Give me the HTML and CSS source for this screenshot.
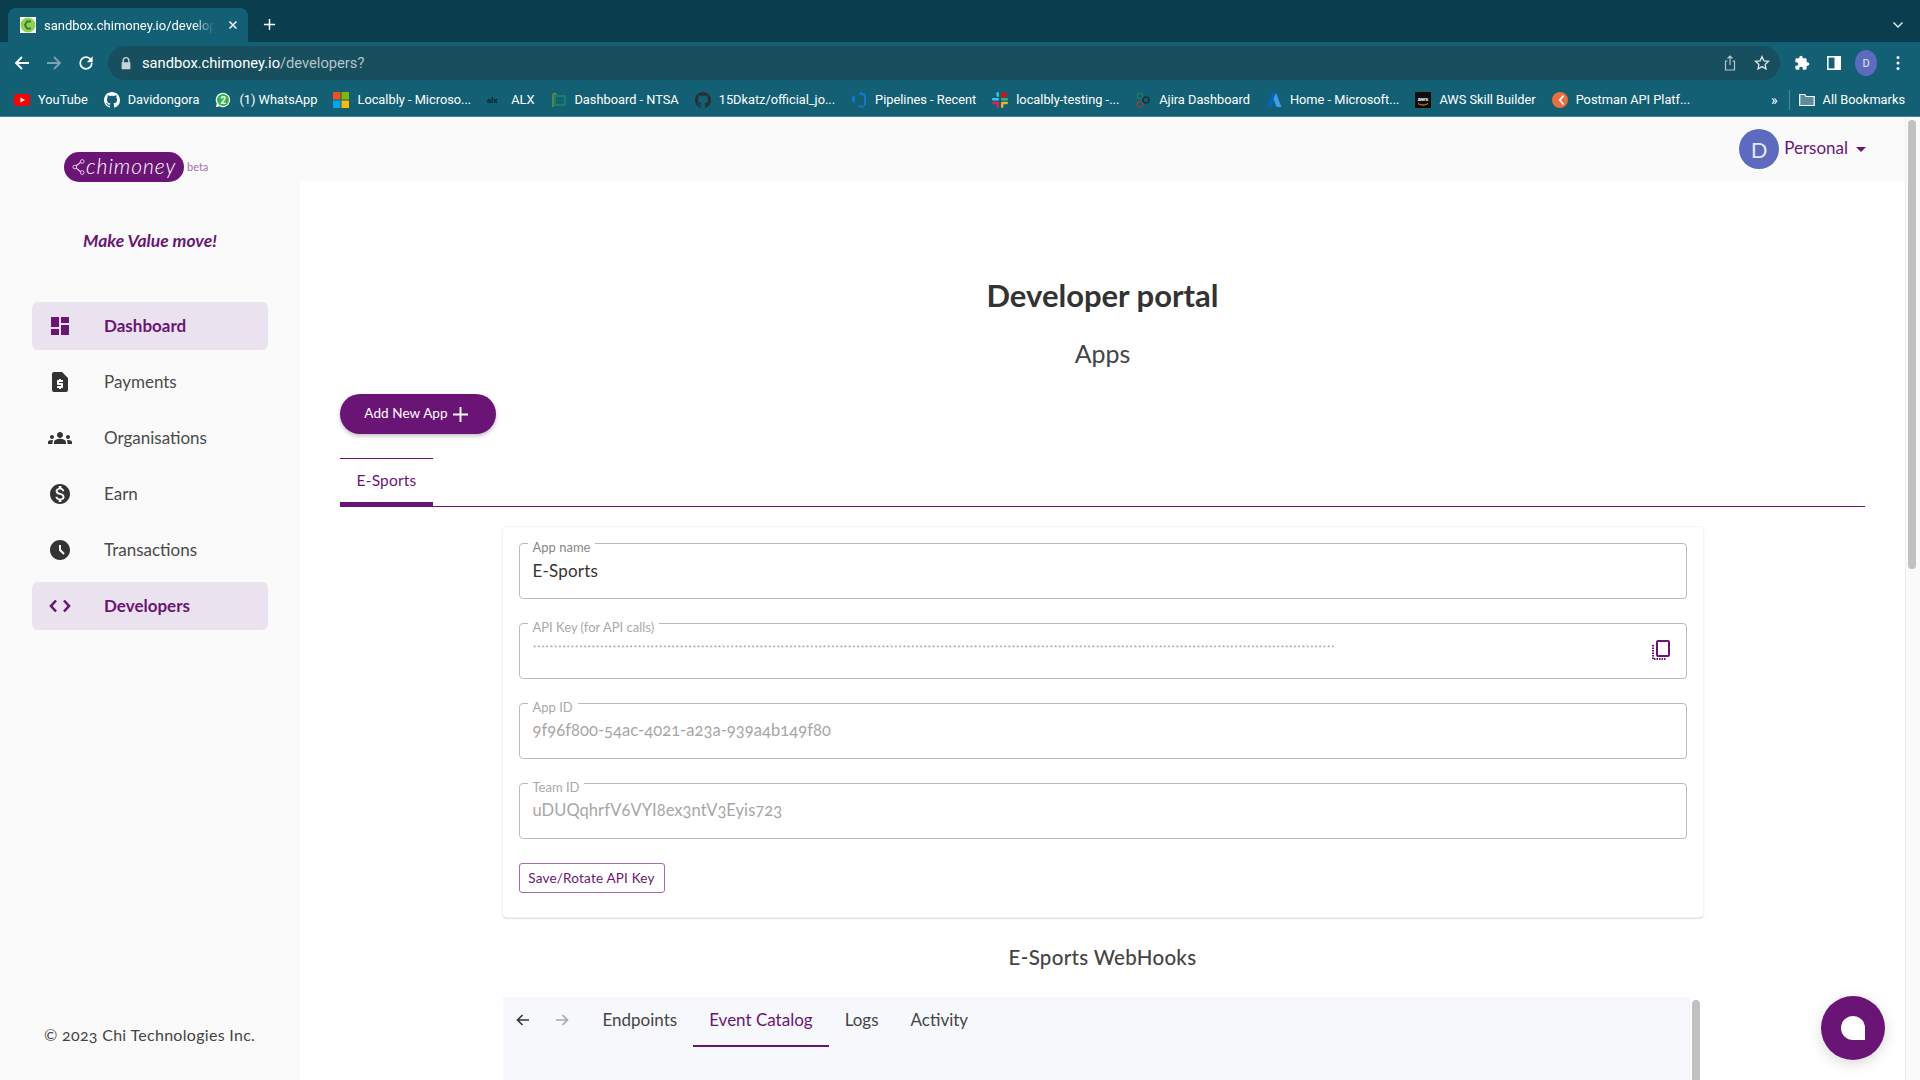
FILE: index.html
```html
<!DOCTYPE html>
<html>
<head>
  <title>Chimoney Developer portal</title>
  <link rel="stylesheet" href="styles.css">
</head>
<body>

  <svg class="defs" width="0" height="0">
    <symbol id="gh" viewBox="0 0 16 16"><path d="M8 0C3.58 0 0 3.58 0 8c0 3.54 2.29 6.53 5.47 7.59.4.07.55-.17.55-.38 0-.19-.01-.82-.01-1.49-2.01.37-2.53-.49-2.69-.94-.09-.23-.48-.94-.82-1.13-.28-.15-.68-.52-.01-.53.63-.01 1.08.58 1.23.82.72 1.21 1.87.87 2.33.66.07-.52.28-.87.51-1.07-1.78-.2-3.64-.89-3.64-3.95 0-.87.31-1.59.82-2.15-.08-.2-.36-1.02.08-2.12 0 0 .67-.21 2.2.82.64-.18 1.32-.27 2-.27.68 0 1.36.09 2 .27 1.53-1.04 2.2-.82 2.2-.82.44 1.1.16 1.92.08 2.12.51.56.82 1.27.82 2.15 0 3.07-1.87 3.75-3.65 3.95.29.25.54.73.54 1.48 0 1.07-.01 1.93-.01 2.2 0 .21.15.46.55.38A8.013 8.013 0 0016 8c0-4.42-3.58-8-8-8z"/></symbol>
  </svg>

  <!-- browser chrome -->
  <div class="tabstrip">
    <div class="tab">
      <svg class="fav" viewBox="0 0 16 16"><rect width="16" height="16" fill="#fff"/><circle cx="8" cy="8" r="7.5" fill="#8ed44f"/><path d="M11 4.5H7L5 8l2 3.5h4" fill="none" stroke="#3c7d3a" stroke-width="2"/></svg>
      <span class="tab-title">sandbox.chimoney.io/developers?</span>
      <svg class="tab-x" viewBox="0 0 10 10"><path d="M1.5 1.5l7 7M8.5 1.5l-7 7" stroke="#fff" stroke-width="1.4"/></svg>
    </div>
    <svg class="new-tab" viewBox="0 0 14 14"><path d="M7 1v12M1 7h12" stroke="#fff" stroke-width="1.6"/></svg>
    <svg class="tab-menu" viewBox="0 0 12 8"><path d="M1.5 1.5L6 6l4.5-4.5" fill="none" stroke="#dfe8ea" stroke-width="1.5"/></svg>
  </div>

  <div class="toolbar">
    <div class="tool"><svg viewBox="0 0 16 16"><path d="M15 8H2M8 2L2 8l6 6" fill="none" stroke="#fff" stroke-width="1.8"/></svg></div>
    <div class="tool"><svg viewBox="0 0 16 16"><path d="M1 8h13M8 2l6 6-6 6" fill="none" stroke="#7fa3ae" stroke-width="1.8"/></svg></div>
    <div class="tool"><svg class="reload" viewBox="0 0 24 24"><path fill="#fff" d="M17.65 6.35A7.96 7.96 0 0012 4a8 8 0 108 8h-2.1A5.9 5.9 0 1112 6.1c1.63 0 3.1.68 4.16 1.74L13 11h7V4l-2.35 2.35z"/></svg></div>
    <div class="address">
      <svg class="lock" viewBox="0 0 16 16"><path fill="#c6d3d7" d="M4 7V5a4 4 0 018 0v2h1v8H3V7h1zm1.6 0h4.8V5a2.4 2.4 0 00-4.8 0v2z"/></svg>
      <span class="url"><span class="host">sandbox.chimoney.io</span>/developers?</span>
      <div class="tool small"><svg viewBox="0 0 16 16"><path d="M5.5 6H3.5v9h9V6h-2M8 10V1.5M5.5 3.5L8 1l2.5 2.5" fill="none" stroke="#b5c6cb" stroke-width="1.2"/></svg></div>
      <div class="tool small"><svg viewBox="0 0 16 16"><path d="M8 1.6l1.9 4.2 4.6.5-3.4 3.1.9 4.5L8 11.6l-4 2.3.9-4.5L1.500 6.300l4.600-.5z" fill="none" stroke="#dbe5e8" stroke-width="1.3"/></svg></div>
    </div>
    <div class="tool"><svg viewBox="0 0 24 24"><path fill="#fff" d="M20.5 11H19V7c0-1.100-.9-2-2-2h-4V3.500C13 2.120 11.880 1 10.500 1S8 2.120 8 3.500V5H4c-1.100 0-1.990.9-1.990 2v3.800H3.500c1.490 0 2.700 1.210 2.700 2.700s-1.210 2.700-2.700 2.700H2V20c0 1.100.9 2 2 2h3.800v-1.500c0-1.490 1.210-2.700 2.700-2.700 1.490 0 2.700 1.210 2.700 2.700V22H17c1.100 0 2-.9 2-2v-4h1.500c1.380 0 2.500-1.120 2.500-2.500S21.880 11 20.500 11z"/></svg></div>
    <div class="tool"><svg viewBox="0 0 16 16"><rect x="1.800" y="1.800" width="12.400" height="12.400" fill="none" stroke="#fff" stroke-width="1.600"/><rect x="8.500" y="2" width="5.500" height="12" fill="#fff"/></svg></div>
    <div class="tool"><span class="profile">D</span></div>
    <div class="tool"><svg viewBox="0 0 4 16"><circle cx="2" cy="2.500" r="1.500" fill="#fff"/><circle cx="2" cy="8" r="1.500" fill="#fff"/><circle cx="2" cy="13.500" r="1.500" fill="#fff"/></svg></div>
  </div>

  <div class="bookmarks">
    <a class="bm"><svg viewBox="0 0 16 16"><rect y="2" width="16" height="12" rx="3" fill="#f00"/><path d="M6.500 5.500L11 8l-4.500 2.500z" fill="#fff"/></svg>YouTube</a>
    <a class="bm"><svg class="gh-light" viewBox="0 0 16 16"><use href="#gh"/></svg>Davidongora</a>
    <a class="bm"><svg viewBox="0 0 16 16"><path d="M8 .7a7.200 7.200 0 00-6.200 10.900L.8 15.300l3.800-1A7.200 7.200 0 108 .7z" fill="#fff"/><circle cx="8" cy="7.900" r="6" fill="#2bb741"/><text x="8" y="11.500" class="wa">2</text></svg>(1) WhatsApp</a>
    <a class="bm"><svg viewBox="0 0 16 16"><rect width="7.500" height="7.500" fill="#f25022"/><rect x="8.500" width="7.500" height="7.500" fill="#7fba00"/><rect y="8.500" width="7.500" height="7.500" fill="#00a4ef"/><rect x="8.500" y="8.500" width="7.500" height="7.500" fill="#ffb900"/></svg>Localbly - Microso...</a>
    <a class="bm"><svg viewBox="0 0 16 16"><text x="0" y="11" class="alx">alx</text></svg>ALX</a>
    <a class="bm"><svg viewBox="0 0 16 16"><rect x="5" y="4" width="10" height="9" fill="none" stroke="#1c8a5a" stroke-width="1.500"/><path d="M3 15V3c0-2 3-2 3 0" fill="none" stroke="#6f8d4a" stroke-width="1.500"/></svg>Dashboard - NTSA</a>
    <a class="bm"><svg class="gh-dark" viewBox="0 0 16 16"><use href="#gh"/></svg>15Dkatz/official_jo...</a>
    <a class="bm"><svg viewBox="0 0 16 16"><path d="M15 2.500V13l-4 3-6-2.200h8V3.800L7 2 10.500 0zM1 5l3-2v8l-3-1.800z" fill="#1476cf"/></svg>Pipelines - Recent</a>
    <a class="bm"><svg viewBox="0 0 16 16"><rect x="0" y="6" width="7" height="2.400" rx="1.200" fill="#36c5f0"/><rect x="4.500" y="0" width="2.400" height="5" rx="1.200" fill="#36c5f0"/><circle cx="12" cy="3" r="2.600" fill="#f00"/><rect x="9" y="6" width="7" height="2.400" rx="1.200" fill="#2eb67d"/><rect x="9" y="9.800" width="7" height="2.400" rx="1.200" fill="#ecb22e"/><rect x="9" y="11" width="2.400" height="5" rx="1.200" fill="#ecb22e"/><rect x="4.500" y="10" width="2.400" height="6" rx="1.200" fill="#e01e5a"/><rect x="0" y="9.800" width="7" height="2.400" rx="1.200" fill="#e01e5a"/></svg>localbly-testing -...</a>
    <a class="bm"><svg viewBox="0 0 16 16"><circle cx="5" cy="4" r="3" fill="none" stroke="#1f8a4c"/><circle cx="11" cy="8" r="3" fill="none" stroke="#12333d" stroke-width="1.500"/><circle cx="5" cy="12.500" r="3" fill="none" stroke="#c0392b"/></svg>Ajira Dashboard</a>
    <a class="bm"><svg viewBox="0 0 16 16"><path d="M6 1h4.500L6 15H.5z" fill="#0a64b4"/><path d="M10 1l5.500 14h-5L7.500 7z" fill="#3aa0ea"/></svg>Home - Microsoft...</a>
    <a class="bm"><svg viewBox="0 0 16 16"><rect width="16" height="16" fill="#0d0d0d"/><text x="8" y="9" class="aws">aws</text><path d="M3 11.500c3 2 7 2 10 0" fill="none" stroke="#f90" stroke-width="1"/></svg>AWS Skill Builder</a>
    <a class="bm"><svg viewBox="0 0 16 16"><circle cx="8" cy="8" r="8" fill="#ef6c3d"/><path d="M11 3L6.500 8l4.500 5 1-1-3-4 3-3.500z" fill="#fff"/></svg>Postman API Platf...</a>
    <span class="bm-more">»</span>
    <span class="bm-sep"></span>
    <a class="bm bm-all"><svg viewBox="0 0 16 16"><path d="M.7 13.500V2.500h5l1.500 2h8v9z" fill="#5d8d9c" stroke="#fff" stroke-width="1.200"/></svg>All Bookmarks</a>
  </div>

  <!-- page -->
  <div class="page">
    <aside class="sidebar">
      <div class="logo-row">
        <div class="logo">
          <svg viewBox="0 0 14 18"><path d="M11 2.500L3 9l8 6.500" fill="none" stroke="#e7d6ea" stroke-width="1.200"/><circle cx="11" cy="3" r="2" fill="#6a1575" stroke="#e7d6ea"/><circle cx="3" cy="9" r="2" fill="#6a1575" stroke="#e7d6ea"/><circle cx="11" cy="15" r="2" fill="#6a1575" stroke="#e7d6ea"/></svg>
          <span>chimoney</span>
        </div>
        <span class="beta">beta</span>
      </div>
      <p class="tagline">Make Value move!</p>
      <nav class="nav">
        <a class="nav-item active"><svg viewBox="0 0 24 24"><path d="M3 13h8V3H3v10zm0 8h8v-6H3v6zm10 0h8V11h-8v10zm0-18v6h8V3h-8z"/></svg>Dashboard</a>
        <a class="nav-item"><svg viewBox="0 0 24 24"><path d="M14 2H6c-1.100 0-1.990.9-1.990 2L4 20c0 1.100.89 2 1.990 2H18c1.100 0 2-.9 2-2V8l-6-6zm1 10h-4v1h3c.55 0 1 .45 1 1v3c0 .55-.45 1-1 1h-1v1h-2v-1H9v-2h4v-1h-3c-.55 0-1-.45-1-1v-3c0-.55.45-1 1-1h1V9h2v1h2v2z"/></svg>Payments</a>
        <a class="nav-item"><svg viewBox="0 0 24 24"><path d="M12 12.750c1.630 0 3.070.39 4.240.9 1.080.48 1.760 1.560 1.760 2.730V18H6v-1.610c0-1.180.68-2.260 1.760-2.730 1.170-.52 2.610-.91 4.240-.91zM4 13c1.100 0 2-.9 2-2s-.9-2-2-2-2 .9-2 2 .9 2 2 2zm1.130 1.100c-.37-.06-.74-.1-1.130-.1-.99 0-1.930.21-2.780.58C.48 14.900 0 15.620 0 16.430V18h4.500v-1.610c0-.83.23-1.610.63-2.290zM20 13c1.100 0 2-.9 2-2s-.9-2-2-2-2 .9-2 2 .9 2 2 2zm4 3.430c0-.81-.48-1.530-1.220-1.850-.85-.37-1.790-.58-2.780-.58-.39 0-.76.04-1.130.1.4.68.63 1.460.63 2.290V18H24v-1.570zM12 6c1.660 0 3 1.340 3 3s-1.340 3-3 3-3-1.340-3-3 1.340-3 3-3z"/></svg>Organisations</a>
        <a class="nav-item"><svg viewBox="0 0 24 24"><path d="M12 2C6.480 2 2 6.480 2 12s4.480 10 10 10 10-4.480 10-10S17.520 2 12 2zm1.410 16.090V20h-2.670v-1.930c-1.710-.36-3.160-1.460-3.270-3.400h1.960c.1 1.050.82 1.870 2.650 1.870 1.960 0 2.400-.98 2.400-1.590 0-.83-.44-1.610-2.670-2.140-2.480-.6-4.180-1.620-4.180-3.670 0-1.720 1.390-2.840 3.110-3.210V4h2.670v1.950c1.860.45 2.790 1.860 2.850 3.390H14.300c-.05-1.110-.64-1.870-2.220-1.870-1.500 0-2.400.68-2.400 1.640 0 .84.65 1.390 2.670 1.910s4.180 1.390 4.180 3.910c-.01 1.830-1.380 2.830-3.120 3.160z"/></svg>Earn</a>
        <a class="nav-item"><svg viewBox="0 0 24 24"><path d="M11.990 2C6.470 2 2 6.480 2 12s4.470 10 9.990 10C17.520 22 22 17.520 22 12S17.520 2 11.990 2zm3.300 14.710L11 12.410V7h2v4.590l3.710 3.710-1.420 1.410z"/></svg>Transactions</a>
        <a class="nav-item active"><svg class="code" viewBox="0 0 24 24"><path d="M8 6.500L3 12l5 5.500M16 6.500l5 5.500-5 5.500"/></svg>Developers</a>
      </nav>
      <p class="copyright">© 2023 Chi Technologies Inc.</p>
    </aside>

    <main class="main">
      <div class="topbar">
        <span class="avatar">D</span>
        <span class="account">Personal</span>
        <span class="caret"></span>
      </div>

      <div class="content">
        <h1>Developer portal</h1>
        <h2>Apps</h2>
        <button class="add-btn"><span>Add New App</span>
          <svg viewBox="0 0 14 14"><path d="M7 0v14M0 7h14" stroke="#fff" stroke-width="1.800"/></svg>
        </button>

        <div class="tabs"><a class="tab-link">E-Sports</a></div>

        <section class="card">
          <div class="field">
            <label>App name</label>
            <span class="value">E-Sports</span>
          </div>
          <div class="field disabled">
            <label>API Key (for API calls)</label>
            <span class="secret">***********************************************************************************************************************************************************************************************</span>
            <svg class="copy" viewBox="0 0 18 20"><rect x="5" y="1" width="12" height="15" rx="1" fill="none" stroke="#6a1575" stroke-width="2"/><path d="M1 5v14h13" fill="none" stroke="#6a1575" stroke-width="2" stroke-dasharray="1.500 1"/></svg>
          </div>
          <div class="field disabled">
            <label>App ID</label>
            <span class="value">9f96f800-54ac-4021-a23a-939a4b149f80</span>
          </div>
          <div class="field disabled">
            <label>Team ID</label>
            <span class="value">uDUQqhrfV6VYI8ex3ntV3Eyis723</span>
          </div>
          <button class="save-btn">Save/Rotate API Key</button>
        </section>

        <h3>E-Sports WebHooks</h3>

        <div class="webhooks">
          <div class="hook-nav">
            <svg class="arrow" viewBox="0 0 16 16"><path d="M14 8H2.500M7.500 3L2.500 8l5 5" fill="none" stroke="#333" stroke-width="1.600"/></svg>
            <svg class="arrow next" viewBox="0 0 16 16"><path d="M2 8h11.500M8.500 3l5 5-5 5" fill="none" stroke="#a8a8ad" stroke-width="1.600"/></svg>
            <a class="hook-tab">Endpoints</a>
            <a class="hook-tab current">Event Catalog</a>
            <a class="hook-tab">Logs</a>
            <a class="hook-tab">Activity</a>
          </div>
          <div class="hook-scroll"><span></span></div>
        </div>
      </div>
    </main>

    <div class="scrollbar"><span></span></div>
    <div class="chat"><span></span></div>
  </div>

</body>
</html>
```

FILE: styles.css
```css
* { box-sizing: border-box; }
html, body { margin: 0; height: 100%; overflow: hidden; }
body { display: flex; flex-direction: column; font-family: Lato, "Open Sans", sans-serif; color: #333; background: #fafafa; }
.defs { position: absolute; }

/* browser chrome */
.tabstrip { height: 42px; flex: none; background: #0a3e4e; display: flex; align-items: flex-end; padding-left: 8px; }
.tab { width: 240px; height: 34px; background: #135f74; border-radius: 8px 8px 0 0; display: flex; align-items: center; padding: 0 10px 0 12px; }
.fav { width: 16px; height: 16px; flex: none; }
.tab-title { font: 13px Roboto, sans-serif; color: #fff; margin-left: 8px; width: 171px; white-space: nowrap; overflow: hidden; -webkit-mask-image: linear-gradient(to right, #000 88%, transparent); mask-image: linear-gradient(to right, #000 88%, transparent); }
.tab-x { width: 10px; height: 10px; margin-left: 14px; }
.new-tab { width: 13px; height: 13px; margin: 0 0 11px 15px; }
.tab-menu { width: 12px; height: 8px; margin: 0 16px 13px auto; }

.toolbar { height: 38px; flex: none; background: #135f74; display: flex; align-items: flex-start; padding: 4px 6px 0; }
.tool { width: 32px; height: 34px; flex: none; display: flex; align-items: center; justify-content: center; }
.tool svg { width: 16px; height: 16px; }
.tool svg.reload { width: 20px; height: 20px; }
.address { flex: 1; height: 34px; margin: 0 6px; background: #174f5e; border-radius: 17px; display: flex; align-items: center; padding: 0 2px 0 10px; }
.lock { width: 16px; height: 16px; flex: none; padding: 1px; }
.url { font: 14.700px Roboto, sans-serif; color: #b5c6cb; margin-left: 8px; flex: 1; }
.host { color: #fff; }
.profile { width: 22px; height: 26px; border-radius: 50%; background: #5c6bc0; color: #e6e8f6; font: 11px Roboto, sans-serif; display: flex; align-items: center; justify-content: center; }

.bookmarks { height: 37px; flex: none; background: #135f74; border-bottom: 1px solid #3c8798; display: flex; align-items: center; padding: 3px 15px 0 14px; }
.bm { display: flex; align-items: center; gap: 8px; margin-right: 16px; font: 12.800px Roboto, sans-serif; color: #fff; white-space: nowrap; }
.bm svg { width: 16px; height: 16px; flex: none; }
.gh-light { fill: #fff; }
.gh-dark { fill: #2a2f33; }
.wa { font: bold 10px Roboto, sans-serif; fill: #fff; text-anchor: middle; }
.alx { font: bold 8px Roboto, sans-serif; fill: #123; }
.aws { font: bold 6px Roboto, sans-serif; fill: #fff; text-anchor: middle; }
.bm-more { margin-left: auto; color: #fff; font: 14px Roboto, sans-serif; }
.bm-sep { width: 1px; height: 20px; background: #4d8a9b; margin: 0 9px 0 11px; }
.bm-all { margin-right: 0; }

/* page */
.page { flex: 1; display: flex; position: relative; min-height: 0; }
.sidebar { width: 300px; flex: none; display: flex; flex-direction: column; }
.logo-row { display: flex; align-items: center; padding: 35px 0 0 64px; }
.logo { width: 120px; height: 30px; border-radius: 15px; background: #6a1575; display: flex; align-items: center; padding: 0 0 3px 8px; color: #fff; font-size: 21px; font-weight: 300; font-style: italic; letter-spacing: 1px; }
.logo svg { width: 13px; height: 18px; flex: none; margin: 3px 1px 0 0; }
.beta { font-size: 11px; color: #a56bb0; margin: 0 0 2px 3px; }
.tagline { margin: 47px 0 0; text-align: center; font-size: 17.500px; line-height: 24px; font-weight: 700; font-style: italic; color: #6a1575; }
.nav { display: flex; flex-direction: column; gap: 8px; padding: 0 32px; margin-top: 49px; }
.nav-item { height: 48px; border-radius: 6px; display: flex; align-items: center; font-size: 17px; color: #4a4a4a; padding: 0 0 2px 16px; }
.nav-item svg { width: 24px; height: 24px; margin: 2px 32px 0 0; fill: #333; flex: none; }
.nav-item.active { background: #eae2ee; color: #6a1575; font-weight: 700; }
.nav-item.active svg { fill: #6a1575; }
.nav-item svg.code { fill: none; stroke: #6a1575; stroke-width: 2.600; }
.copyright { margin: auto 0 0; padding: 0 0 33px 44px; font-size: 16px; line-height: 24px; color: #444; letter-spacing: .3px; font-variant-numeric: oldstyle-nums; }

.main { flex: 1; min-width: 0; display: flex; flex-direction: column; }
.topbar { height: 64px; flex: none; display: flex; align-items: flex-start; padding: 12px 39px 0 0; justify-content: flex-end; }
.avatar { width: 40px; height: 40px; border-radius: 50%; background: #5c6bc0; color: #e6e8f6; font-size: 22px; display: flex; align-items: center; justify-content: center; }
.account { font-size: 17px; line-height: 38px; color: #6a1575; margin-left: 5px; }
.caret { width: 0; height: 0; border: 5px solid transparent; border-top-color: #6a1575; border-bottom: 0; margin: 18px 0 0 8px; }

.content { flex: 1; background: #fff; padding: 0 40px; overflow: hidden; }
h1 { margin: 97px 0 0; text-align: center; font-size: 31px; line-height: 34px; font-weight: 700; color: #333; }
h2 { margin: 26px 0 0; text-align: center; font-size: 25px; line-height: 30px; font-weight: 400; color: #444; }
.add-btn { margin-top: 26px; width: 156px; height: 40px; border: 0; border-radius: 20px; background: #6a1575; color: #fff; font: 13.500px Lato, sans-serif; letter-spacing: .1px; display: flex; align-items: center; justify-content: center; gap: 5px; padding-right: 10px; box-shadow: 0 2px 4px rgba(0,0,0,.25); }
.add-btn span { margin-bottom: 2px; }
.add-btn svg { width: 15px; height: 15px; margin-top: 1px; }

.tabs { margin-top: 24px; border-bottom: 1px solid #6a1575; display: flex; }
.tab-link { width: 93px; height: 48px; padding-bottom: 2px; border-top: 1px solid #6a1575; border-bottom: 4px solid #6a1575; color: #6a1575; font-size: 15.500px; letter-spacing: .2px; display: flex; align-items: center; justify-content: center; }

.card { width: 1200px; margin: 20px auto 0; padding: 16px 16px 24px; background: #fff; border-radius: 4px; box-shadow: 0 0 0 1px #f4f4f4, 0 1px 2px rgba(0,0,0,.4); }
.field { position: relative; height: 56px; margin-bottom: 24px; border: 1px solid #bbb; border-radius: 4px; padding: 0 13px 2px; display: flex; align-items: center; }
.field label { position: absolute; top: -2px; left: 8px; padding: 0 5px; background: #fff; font-size: 13px; line-height: 10px; color: #888; }
.field.disabled label { color: #aaa; }
.value { font-size: 17px; color: #333; font-variant-numeric: oldstyle-nums; letter-spacing: .2px; }
.disabled .value { font-size: 16.500px; color: #a6a6a6; letter-spacing: .05px; }
.secret { font: 7px "Liberation Mono", monospace; color: #999; align-self: flex-start; padding-top: 20px; white-space: nowrap; }
.copy { position: absolute; right: 16px; top: 16px; width: 18px; height: 20px; }
.save-btn { display: block; width: 146px; height: 30px; padding: 0; border: 1px solid #a56bb0; border-radius: 3px; background: #fff; color: #6a1575; font: 13.500px Lato, sans-serif; letter-spacing: .2px; }

h3 { margin: 28px 0 0; text-align: center; font-size: 20.500px; line-height: 24px; font-weight: 500; color: #444; letter-spacing: .3px; }
.webhooks { width: 1200px; margin: 28px auto 0; height: 90px; display: flex; }
.hook-nav { flex: 1; background: #f7f8fc; height: 100%; display: flex; align-items: flex-start; padding-left: 12px; }
.arrow { width: 16px; height: 16px; flex: none; margin-top: 15px; }
.arrow.next { margin-left: 23px; margin-right: 17px; }
.hook-tab { height: 50px; padding: 0 16px 3px; display: flex; align-items: center; font-size: 17px; color: #444; border-bottom: 2px solid transparent; }
.hook-tab.current { color: #6a1575; border-bottom-color: #6a1575; }
.hook-scroll { width: 14px; flex: none; border-left: 1px solid #f0f0f0; padding: 3px 0 0 2px; }
.hook-scroll span { display: block; width: 8px; height: 100%; background: #c1c1c1; border-radius: 4px; }

.scrollbar { width: 15px; flex: none; background: #fafafa; border-left: 1px solid #eee; padding: 3px 3px 0 2px; }
.scrollbar span { display: block; width: 8px; height: 449px; background: #c1c1c1; border-radius: 4px; }

.chat { position: absolute; left: 1821px; top: 879px; width: 64px; height: 64px; border-radius: 50%; background: #6a1575; display: flex; align-items: center; justify-content: center; box-shadow: 0 4px 14px rgba(0,0,0,.15); }
.chat span { width: 24px; height: 24px; background: #fff; border-radius: 50% 50% 0 50%; }
```
